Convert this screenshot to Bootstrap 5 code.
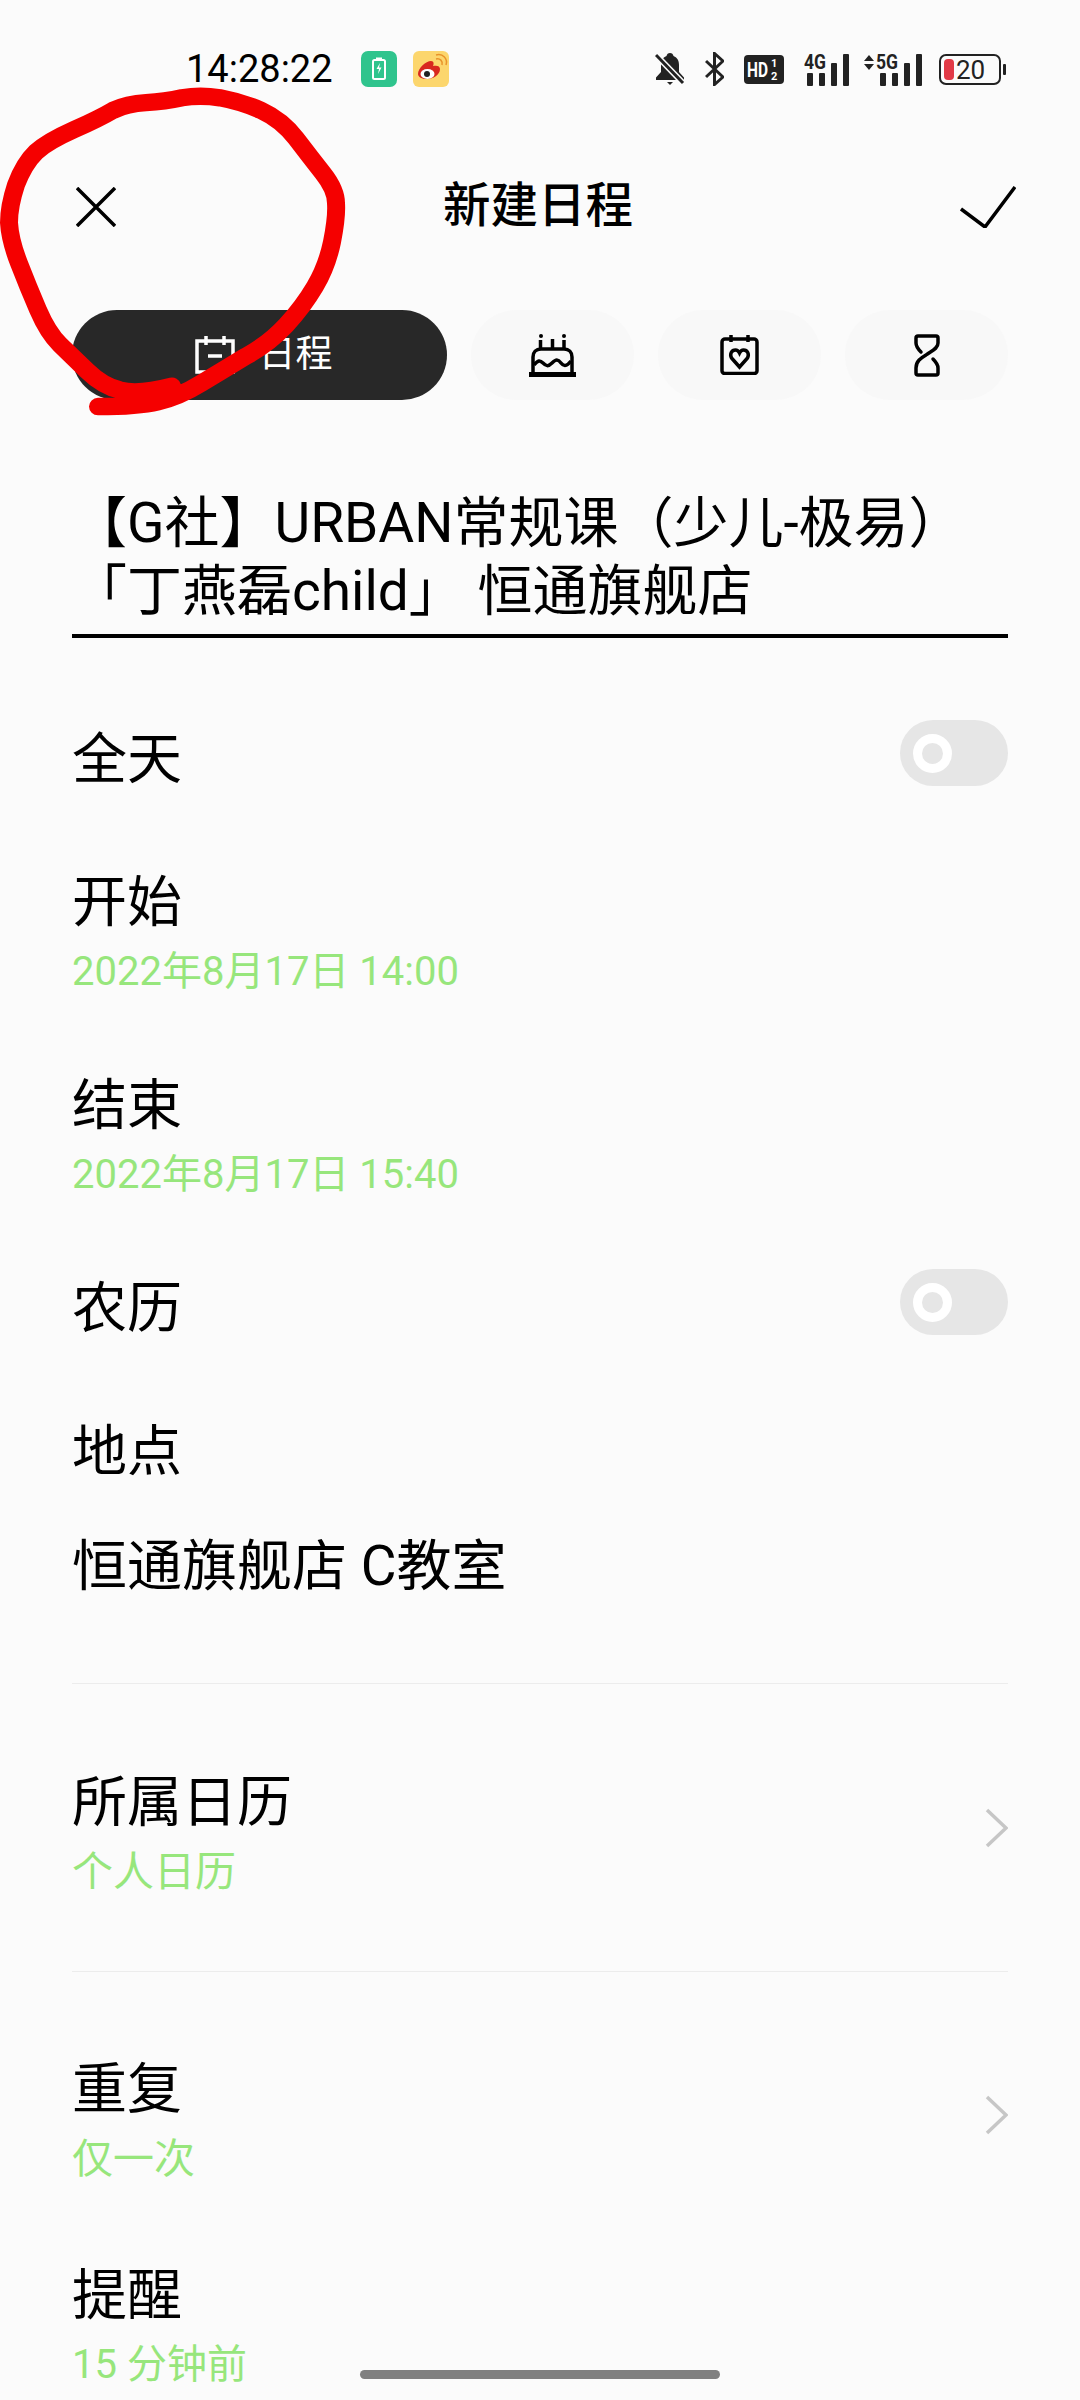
<!DOCTYPE html>
<html lang="zh-CN">
<head>
    <meta charset="UTF-8">
    <meta name="viewport" content="width=device-width, initial-scale=1.0">
    <title>新建日程</title>
    <link href="https://cdn.jsdelivr.net/npm/bootstrap@5.3.0/dist/css/bootstrap.min.css" rel="stylesheet">
    <style>
        html, body {
            background-color: #fbfbfb;
        }

        body {
            color: #000;
            font-family: Roboto, "Noto Sans CJK SC", sans-serif;
        }

        .phone {
            width: 1080px;
            height: 2400px;
            overflow: hidden;
            position: relative;
        }

        .status-line {
            height: 136px;
            padding: 2px 74px 0 186px;
        }

        .clock {
            font-size: 38px;
            line-height: 1;
            width: 175px;
        }

        .app-icon {
            width: 36px;
            height: 36px;
            margin-right: 16px;
        }

        .status-right {
            gap: 20px;
            margin-left: auto;
        }

        .icon-signal { margin-bottom: 3px; }
        .icon-5g { margin-left: -7px; }
        .icon-battery { margin-left: -4px; }

        .head-line {
            height: 142px;
            padding: 0 64px 0 76px;
        }

        .head-title {
            font-size: 47.5px;
            font-weight: 500;
            line-height: 1;
        }

        .tab-line {
            margin: 32px 72px 0;
            gap: 24px;
        }

        .tab-pill {
            height: 90px;
            width: 163px;
            border-radius: 45px;
            background-color: #f8f8f8;
            border: 0;
            padding: 0;
        }

        .tab-pill.active-tab {
            width: 375px;
            background-color: #282828;
            color: #fff;
            font-size: 37px;
            gap: 24px;
            padding-left: 8px;
        }

        .main-area {
            padding: 0 72px;
        }

        .event-name {
            font-size: 55px;
            line-height: 68px;
            padding: 89px 0 9px;
            border-bottom: 4px solid #000;
            white-space: nowrap;
        }

        .item-name {
            font-size: 55px;
            line-height: 70px;
        }

        .item-sub {
            font-size: 40px;
            line-height: 50px;
            margin-top: 10px;
            color: #97e67c;
        }

        .item-sub.sub-cjk {
            font-size: 41px;
        }

        .gap-first { margin-top: 86px; }
        .gap-item { margin-top: 73px; }
        .gap-last { margin-top: 76px; }
        .gap-small { margin-top: 45px; }
        .gap-rule-a { margin-top: 83px; }
        .gap-rule-b { margin-top: 82px; }

        .rule-line {
            margin: 82px 0 0;
            border: 0;
            border-top: 1px solid #ececec;
            opacity: 1;
        }

        .rule-line.rule-short {
            margin-top: 74px;
        }

        .toggle-track {
            width: 108px;
            height: 66px;
            border-radius: 33px;
            background-color: #e6e6e6;
            padding-left: 13px;
            margin-top: -12px;
        }

        .toggle-ring {
            width: 39px;
            height: 39px;
            border-radius: 50%;
            border: 9px solid #fff;
        }

        .row-arrow {
            margin-bottom: 8px;
        }

        .home-bar {
            position: absolute;
            left: 360px;
            top: 2370px;
            width: 360px;
            height: 9px;
            border-radius: 5px;
            background-color: #808080;
        }

        .red-mark {
            position: absolute;
            left: 0;
            top: 0;
        }
    </style>
</head>
<body>
<div class="phone">
    <div class="status-line d-flex align-items-center">
        <span class="clock">14:28:22</span>
        <svg class="app-icon" viewBox="0 0 36 36">
            <rect width="36" height="36" rx="7" fill="#2fc48d"/>
            <rect x="12" y="9" width="12" height="19" rx="1.5" fill="none" stroke="#fff" stroke-width="2"/>
            <rect x="15" y="6.5" width="6" height="2.5" fill="#fff"/>
            <path d="M19 12l-3.500 6h2.500l-1 5 3.500-6.500h-2.500z" fill="#fff"/>
        </svg>
        <svg class="app-icon" viewBox="0 0 36 36">
            <rect width="36" height="36" rx="6" fill="#fcd66d"/>
            <path d="M5 23c0-6 8-13 13-13 3 0 3 3 2 5 4-1 7 0 7 3 0 6-7 10-13 10-5 0-9-2-9-5z" fill="#d8281f"/>
            <ellipse cx="14.500" cy="23" rx="7" ry="5" fill="#fff"/>
            <circle cx="14" cy="23" r="3" fill="#222"/>
            <path d="M23 8c4-1 7 2 6 6M23 4c7-2 12 4 10 10" fill="none" stroke="#e8932a" stroke-width="1.500"/>
        </svg>
        <div class="status-right d-flex align-items-center">
            <svg width="30" height="34" viewBox="0 0 30 34">
                <path d="M15 1c2 0 3 1 3.500 3 4 1.500 5.500 5 5.500 9v7l5 5.500v2.500H1v-2.500l5-5.500v-7c0-4 1.500-7.500 5.500-9C12 2 13 1 15 1z" fill="#222"/>
                <path d="M12 30h6l-3 3z" fill="#222"/>
                <path d="M2 4l27 28" stroke="#fbfbfb" stroke-width="6"/>
                <path d="M1 3l27 28" stroke="#222" stroke-width="3"/>
            </svg>
            <svg width="19" height="34" viewBox="0 0 19 34">
                <path d="M1 9l17 16-8.500 7.500V1.500L18 9 1 25" fill="none" stroke="#222" stroke-width="3"/>
            </svg>
            <svg width="40" height="29" viewBox="0 0 40 29">
                <rect width="40" height="29" rx="4" fill="#222"/>
                <text x="3" y="22" font-family="Roboto" font-weight="700" font-size="20" fill="#fff" textLength="21" lengthAdjust="spacingAndGlyphs">HD</text>
                <text x="27" y="12" font-family="Roboto" font-weight="700" font-size="11" fill="#fff">1</text>
                <text x="27" y="25" font-family="Roboto" font-weight="700" font-size="11" fill="#fff">2</text>
            </svg>
            <svg class="icon-signal" width="46" height="36" viewBox="0 -3 46 36">
                <text x="0" y="16" font-family="Roboto" font-weight="700" font-size="20" fill="#222" textLength="22" lengthAdjust="spacingAndGlyphs">4G</text>
                <rect x="3" y="20" width="6" height="13" rx="1" fill="#222"/>
                <rect x="15" y="20" width="6" height="13" rx="1" fill="#222"/>
                <rect x="27" y="10" width="6" height="23" rx="1" fill="#222"/>
                <rect x="39" y="1" width="6" height="32" rx="1" fill="#222"/>
            </svg>
            <svg class="icon-signal icon-5g" width="60" height="36" viewBox="0 -3 60 36">
                <path d="M1 8l5-6 5 6zM1 11l5 6 5-6z" fill="#222"/>
                <text x="13" y="16" font-family="Roboto" font-weight="700" font-size="20" fill="#222" textLength="22" lengthAdjust="spacingAndGlyphs">5G</text>
                <rect x="17" y="20" width="6" height="13" rx="1" fill="#222"/>
                <rect x="29" y="20" width="6" height="13" rx="1" fill="#222"/>
                <rect x="41" y="10" width="6" height="23" rx="1" fill="#222"/>
                <rect x="53" y="1" width="6" height="32" rx="1" fill="#222"/>
            </svg>
            <svg class="icon-battery" width="67" height="31" viewBox="0 0 67 31">
                <rect x="1" y="1" width="60" height="29" rx="6" fill="none" stroke="#222" stroke-width="2"/>
                <rect x="5" y="5" width="10" height="21" rx="4" fill="#e23a46"/>
                <text x="17" y="25" font-family="Roboto" font-size="26" fill="#222">20</text>
                <rect x="64" y="10" width="3" height="11" rx="1" fill="#222"/>
            </svg>
        </div>
    </div>

    <div class="head-line d-flex align-items-center justify-content-between">
        <svg width="40" height="40" viewBox="0 0 40 40">
            <path d="M1 1l38 38M39 1L1 39" stroke="#000" stroke-width="3.500" fill="none"/>
        </svg>
        <div class="head-title">新建日程</div>
        <svg width="56" height="42" viewBox="0 0 56 42">
            <path d="M1 23l24 18L55 1" stroke="#000" stroke-width="3.500" fill="none"/>
        </svg>
    </div>

    <div class="tab-line d-flex">
        <button type="button" class="tab-pill active-tab d-flex align-items-center justify-content-center">
            <svg width="40" height="38" viewBox="0 0 40 38">
                <path d="M2 5h36v31H2zM11 0v9M29 0v9M13 20h14" fill="none" stroke="#fff" stroke-width="3.500"/>
            </svg>
            <span>日程</span>
        </button>
        <button type="button" class="tab-pill d-flex align-items-center justify-content-center">
            <svg width="47" height="43" viewBox="0 0 47 43">
                <rect y="38" width="47" height="5" fill="#000"/>
                <path d="M4 39V23c0-5 3-8 8-8h23c5 0 8 3 8 8v16" fill="none" stroke="#000" stroke-width="3.500"/>
                <path d="M5 31c4-5 6-5 9-2s5 4 9 0 6-4 9 0 6 3 10-2" fill="none" stroke="#000" stroke-width="3.500"/>
                <path d="M11.500 6v9M23.500 5v10M35 6v9" stroke="#000" stroke-width="3.500"/>
                <circle cx="12" cy="2" r="2" fill="#000"/>
                <circle cx="35" cy="2" r="2" fill="#000"/>
            </svg>
        </button>
        <button type="button" class="tab-pill d-flex align-items-center justify-content-center">
            <svg width="39" height="40" viewBox="0 0 39 40">
                <path d="M5 4h29c1.500 0 3 1 3 3v29c0 1.500-1.500 2.500-3 2.500H5c-1.500 0-3-1-3-2.500V7c0-2 1.500-3 3-3z" fill="none" stroke="#000" stroke-width="3.500"/>
                <path d="M11 0v7M28 0v7" stroke="#000" stroke-width="3.500"/>
                <path d="M19.500 32l-8-9c-2-4 0-8 4-8 2 0 3 1 4 3 1-2 2-3 4-3 4 0 6 4 4 8z" fill="none" stroke="#000" stroke-width="3.500"/>
            </svg>
        </button>
        <button type="button" class="tab-pill d-flex align-items-center justify-content-center">
            <svg width="26" height="43" viewBox="0 0 26 43">
                <path d="M7 18c-3-3-5-5-5-9V4c0-1.500 1-2 2-2h18c1 0 2 .5 2 2v5c0 6-7 8-12 12-5 3-10 6-10 13v5c0 1.500 1 2 2 2h18c1 0 2-.5 2-2v-5c0-4-2-6-5-9" fill="none" stroke="#000" stroke-width="3.500" stroke-linecap="round"/>
            </svg>
        </button>
    </div>

    <div class="main-area">
        <div class="event-name">【G社】URBAN常规课（少儿-极易）<br>「丁燕磊child」 恒通旗舰店</div>

        <div class="d-flex align-items-center justify-content-between gap-first">
            <div class="item-name">全天</div>
            <div class="toggle-track d-flex align-items-center"><div class="toggle-ring"></div></div>
        </div>

        <div class="gap-item">
            <div class="item-name">开始</div>
            <div class="item-sub">2022年8月17日 14:00</div>
        </div>

        <div class="gap-item">
            <div class="item-name">结束</div>
            <div class="item-sub">2022年8月17日 15:40</div>
        </div>

        <div class="d-flex align-items-center justify-content-between gap-item">
            <div class="item-name">农历</div>
            <div class="toggle-track d-flex align-items-center"><div class="toggle-ring"></div></div>
        </div>

        <div class="item-name gap-item">地点</div>
        <div class="item-name gap-small">恒通旗舰店 C教室</div>

        <hr class="rule-line">

        <div class="d-flex align-items-center justify-content-between gap-rule-a">
            <div>
                <div class="item-name">所属日历</div>
                <div class="item-sub sub-cjk">个人日历</div>
            </div>
            <svg class="row-arrow" width="23" height="40" viewBox="0 0 23 40">
                <path d="M2 2l19 18L2 38" fill="none" stroke="#c6c6c6" stroke-width="3.500"/>
            </svg>
        </div>

        <hr class="rule-line rule-short">

        <div class="d-flex align-items-center justify-content-between gap-rule-b">
            <div>
                <div class="item-name">重复</div>
                <div class="item-sub sub-cjk">仅一次</div>
            </div>
            <svg class="row-arrow" width="23" height="40" viewBox="0 0 23 40">
                <path d="M2 2l19 18L2 38" fill="none" stroke="#c6c6c6" stroke-width="3.500"/>
            </svg>
        </div>

        <div class="gap-last">
            <div class="item-name">提醒</div>
            <div class="item-sub">15 分钟前</div>
        </div>
    </div>

    <div class="home-bar"></div>

    <svg class="red-mark" width="350" height="430" viewBox="0 0 350 430">
        <path transform="scale(1 .968)" d="M98 420Q138 420 158 415Q179 410 201 396Q224 382 246 368Q269 355 286 336Q303 317 315 296Q327 275 332 250Q337 224 336 210Q336 196 323 179Q310 162 296 143Q282 124 261 114Q241 105 220 101Q200 98 182 101Q165 105 146 106Q127 107 113 114Q100 122 74 134Q48 146 36 157Q24 169 16 191Q9 213 9 230Q10 248 19 272Q28 296 38 320Q48 344 60 356Q72 368 87 383Q103 399 120 403Q138 408 172 399" fill="none" stroke="#f50000" stroke-width="18" stroke-linecap="round" stroke-linejoin="round"/>
    </svg>
</div>
<script src="https://cdn.jsdelivr.net/npm/bootstrap@5.3.0/dist/js/bootstrap.bundle.min.js"></script>
</body>
</html>
